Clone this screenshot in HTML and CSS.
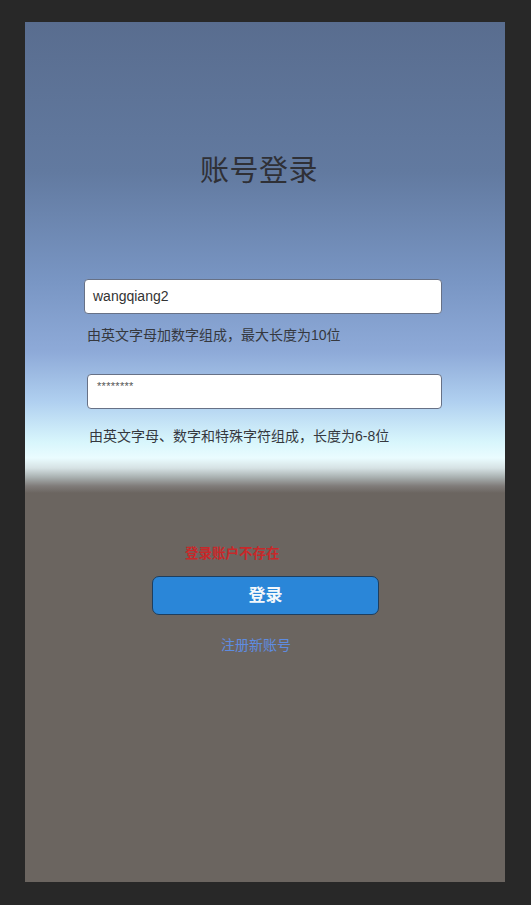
FILE: index.html
```html
<!DOCTYPE html>
<html lang="zh-CN">
<head>
<meta charset="utf-8">
<title>账号登录</title>
<link rel="stylesheet" href="styles.css">
</head>
<body>
<div class="screen">
  <h1 class="title">账号登录</h1>
  <div class="field field-user"><span class="value">wangqiang2</span></div>
  <p class="hint hint-user">由英文字母加数字组成，最大长度为10位</p>
  <div class="field field-pass"><span class="value pass">********</span></div>
  <p class="hint hint-pass">由英文字母、数字和特殊字符组成，长度为6-8位</p>
  <p class="error">登录账户不存在</p>
  <button class="login-btn" type="button">登录</button>
  <a class="register" href="#">注册新账号</a>
</div>
</body>
</html>
```

FILE: styles.css
```css
html, body {
  margin: 0;
  padding: 0;
  background: #282828;
}
body {
  padding: 22px 0 0 25px;
  font-family: "Liberation Sans", "Noto Sans CJK SC", sans-serif;
}
.screen {
  width: 480px;
  height: 860px;
  box-sizing: border-box;
  padding-top: 131px;
  display: flex;
  flex-direction: column;
  align-items: flex-start;
  background: linear-gradient(to bottom,
    #596d8f 0px,
    #627aa0 150px,
    #7996c4 260px,
    #8eaad8 330px,
    #b0d0f0 380px,
    #d8f6fc 420px,
    #eafcff 436px,
    #d6e2e4 446px,
    #aab2b2 455px,
    #807c7a 464px,
    #6b6560 471px,
    #6b6560 860px);
}
.title {
  margin: 0 0 0 175px;
  font-size: 29px;
  line-height: 36px;
  font-weight: normal;
  color: #2f3036;
  letter-spacing: 0.5px;
}
.field {
  margin-top: 90px;
  margin-left: 59px;
  width: 358px;
  height: 35px;
  box-sizing: border-box;
  background: #fff;
  border: 1px solid #677186;
  border-radius: 4px;
  display: flex;
  align-items: center;
  padding-left: 8px;
  padding-bottom: 2px;
}
.value {
  font-size: 14px;
  color: #333;
}
.field-pass {
  margin-top: 29px;
  margin-left: 62px;
  width: 355px;
  align-items: flex-start;
  padding-left: 9px;
  padding-top: 5px;
}
.pass {
  font-size: 11px;
  line-height: 12px;
  color: #555;
  letter-spacing: 0.3px;
}
.hint {
  margin: 11px 0 0 62px;
  font-size: 14px;
  line-height: 20px;
  color: #35383e;
}
.hint-pass {
  margin: 17px 0 0 64px;
}
.error {
  margin: 99px 0 0 160px;
  font-size: 13.5px;
  line-height: 18px;
  color: #c8282a;
  font-weight: bold;
}
.login-btn {
  margin: 13px 0 0 127px;
  width: 227px;
  height: 39px;
  box-sizing: border-box;
  background: #2a86d8;
  border: 1.5px solid #1e3e5e;
  border-radius: 7px;
  color: #f4f8fb;
  font-family: "Liberation Sans", "Noto Sans CJK SC", sans-serif;
  font-size: 17px;
  font-weight: bold;
  padding: 0 0 4px 0;
}
.register {
  margin: 20px 0 0 196px;
  font-size: 14px;
  line-height: 20px;
  color: #5e8ce0;
  text-decoration: none;
}
```
